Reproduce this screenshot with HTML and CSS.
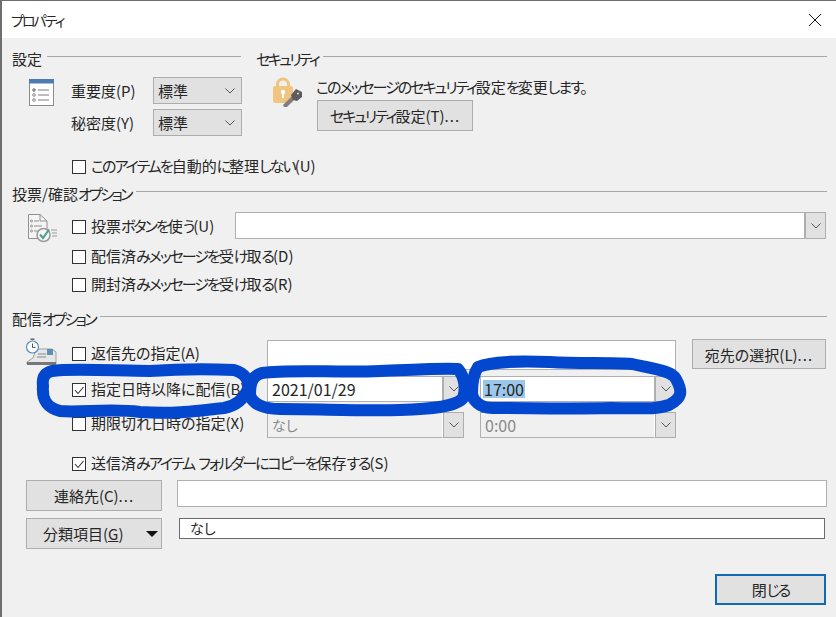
FILE: index.html
```html
<!DOCTYPE html>
<html lang="ja">
<head>
<meta charset="utf-8">
<title>プロパティ</title>
<link rel="stylesheet" href="styles.css">
</head>
<body>
<div class="dialog">
  <header class="titlebar">
    <span class="title"><span class="k">プロパティ</span></span>
    <svg class="close" width="14" height="14" viewBox="0 0 14 14"><path d="M1 1L13 13M13 1L1 13" stroke="#111" stroke-width="1" fill="none"/></svg>
  </header>
  <main class="main">
    <div class="top">
      <section class="col-left">
        <div class="legend"><span>設定</span><i></i></div>
        <div class="settings">
          <svg class="icon-list" width="25" height="27" viewBox="0 0 25 27">
            <rect x="0.5" y="0.5" width="24" height="26" fill="#fff" stroke="#8c8c8c"/>
            <rect x="0" y="0" width="25" height="4.500" fill="#4f7cb0"/>
            <g fill="#fff" stroke="#8a8a8a"><circle cx="5" cy="11" r="1.300" fill="#8a8a8a"/><circle cx="5" cy="16" r="1.300"/><circle cx="5" cy="21" r="1.300"/></g>
            <path d="M9 11H20M9 16H20M9 21H20" stroke="#7a7a7a"/>
          </svg>
          <div class="set-rows">
            <div class="set-row"><label class="set-label">重要度(P)</label><div class="select"><span>標準</span><svg class="chev" width="10" height="6" viewBox="0 0 10 6"><path d="M0.500 0.500L5 5L9.500 0.500" fill="none" stroke="#555"/></svg></div></div>
            <div class="set-row"><label class="set-label">秘密度(Y)</label><div class="select"><span>標準</span><svg class="chev" width="10" height="6" viewBox="0 0 10 6"><path d="M0.500 0.500L5 5L9.500 0.500" fill="none" stroke="#555"/></svg></div></div>
          </div>
        </div>
        <div class="check-row archive"><span class="check"></span><span class="lbl"><span class="k">このアイテムを</span>自動的<span class="k">に</span>整理<span class="k">しない</span>(U)</span></div>
      </section>
      <section class="col-right">
        <div class="legend"><span><span class="kk">セキュリティ</span></span><i></i></div>
        <div class="security">
          <svg class="icon-lock" width="32" height="32" viewBox="0 0 32 32">
            <path d="M6.500 10V7.500a5.500 5.500 0 0 1 11 0V10" fill="none" stroke="#efc47c" stroke-width="3"/>
            <rect x="2" y="9" width="20" height="17" rx="2" fill="#f0c57f"/>
            <circle cx="12" cy="15" r="2.200" fill="#fff"/><rect x="11" y="16" width="2" height="5" fill="#fff"/>
            <path d="M12 28L21 19L24 22L16 30L13 30Z" fill="#808080"/>
            <path d="M20 18L25 12L31 15L31 20L26 24L22 23Z" fill="#5c5c5c"/>
            <circle cx="27" cy="16.500" r="1" fill="#ddd"/>
          </svg>
          <div class="sec-text">
            <p><span class="k">このメッセージのセキュリティ</span>設定<span class="k">を</span>変更<span class="k">します。</span></p>
            <div class="btn sec-btn"><span><span class="k">セキュリティ</span>設定(T)<span class="d">...</span></span></div>
          </div>
        </div>
      </section>
    </div>

    <section class="vote">
      <div class="legend"><span>投票/確認<span class="kk">オプション</span></span><i></i></div>
      <div class="vote-body">
        <svg class="icon-vote" width="32" height="30" viewBox="0 0 32 30">
          <path d="M1.500 1.500H13L20 8V25.500H1.500Z" fill="#f4f4f4" stroke="#909090"/>
          <path d="M13 1.500V8H20" fill="none" stroke="#909090"/>
          <path d="M7 8H12M7 13H15M7 18H12" stroke="#8f8f8f"/>
          <g fill="none" stroke="#8f8f8f"><circle cx="4.500" cy="8" r="1"/><circle cx="4.500" cy="13" r="1"/><circle cx="4.500" cy="18" r="1"/></g>
          <circle cx="16.500" cy="22" r="6.500" fill="#f4f4f4" stroke="#9a9a9a" stroke-width="1.500"/>
          <path d="M13 21.500L16 25L22 16.500" fill="none" stroke="#4f9c8c" stroke-width="2"/>
          <path d="M24 17H30M25 20H30M25 23H30" stroke="#9a9a9a"/>
        </svg>
        <div class="vote-rows">
          <div class="vote-first">
            <div class="check-row vote-check"><span class="check"></span><span class="lbl">投票<span class="k">ボタンを</span>使<span class="k">う</span>(U)</span></div>
            <div class="combo vote-combo"><div class="field"></div><div class="drop"><svg width="10" height="6" viewBox="0 0 10 6"><path d="M0.500 0.500L5 5L9.500 0.500" fill="none" stroke="#555"/></svg></div></div>
          </div>
          <div class="check-row row-d"><span class="check"></span><span class="lbl">配信済<span class="k">みメッセージを</span>受<span class="k">け</span>取<span class="k">る</span>(D)</span></div>
          <div class="check-row row-r"><span class="check"></span><span class="lbl">開封済<span class="k">みメッセージを</span>受<span class="k">け</span>取<span class="k">る</span>(R)</span></div>
        </div>
      </div>
    </section>

    <section class="delivery">
      <div class="legend"><span>配信<span class="kk">オプション</span></span><i></i></div>
      <div class="delivery-grid">
        <svg class="icon-clock" width="32" height="28" viewBox="0 0 32 28">
          <path d="M8 20L11 11H27L31 14V26H2V24Z" fill="#e6e6e6" stroke="#a0a0a0"/>
          <rect x="22" y="11" width="6" height="6" fill="#5f8fb8"/>
          <path d="M13 16H21M12 19H21" stroke="#8a8a8a"/>
          <rect x="2" y="24" width="29" height="3" fill="#777"/>
          <circle cx="7.500" cy="9" r="6" fill="#fff" stroke="#4f8fc0" stroke-width="1.200"/>
          <path d="M7.500 5.500V9.500H10.500" fill="none" stroke="#555"/>
          <rect x="5.500" y="0.500" width="4" height="1.500" fill="#666"/>
        </svg>
        <div class="check-row cell-a"><span class="check"></span><span class="lbl">返信先の指定(A)</span></div>
        <div class="field reply"></div>
        <div class="btn reply-btn"><span>宛先の選択(L)<span class="d">...</span></span></div>

        <div class="check-row cell-b"><span class="check"><svg width="12" height="12" viewBox="0 0 12 12"><path d="M2 6L5 9.500L10.500 3" fill="none" stroke="#333" stroke-width="1.100"/></svg></span><span class="lbl">指定日時以降に配信(B)</span></div>
        <div class="combo date-b"><div class="field">2021/01/29</div><div class="drop"><svg width="10" height="6" viewBox="0 0 10 6"><path d="M0.500 0.500L5 5L9.500 0.500" fill="none" stroke="#555"/></svg></div></div>
        <div class="combo time-b"><div class="field"><span class="sel">17:00</span></div><div class="drop"><svg width="10" height="6" viewBox="0 0 10 6"><path d="M0.500 0.500L5 5L9.500 0.500" fill="none" stroke="#555"/></svg></div></div>

        <div class="check-row cell-c"><span class="check"></span><span class="lbl">期限切れ日時の指定(X)</span></div>
        <div class="combo off date-c"><div class="field nashi">なし</div><div class="drop"><svg width="10" height="6" viewBox="0 0 10 6"><path d="M0.500 0.500L5 5L9.500 0.500" fill="none" stroke="#555"/></svg></div></div>
        <div class="combo off time-c"><div class="field">0:00</div><div class="drop"><svg width="10" height="6" viewBox="0 0 10 6"><path d="M0.500 0.500L5 5L9.500 0.500" fill="none" stroke="#555"/></svg></div></div>

        <div class="check-row cell-d"><span class="check"><svg width="12" height="12" viewBox="0 0 12 12"><path d="M2 6L5 9.500L10.500 3" fill="none" stroke="#333" stroke-width="1.100"/></svg></span><span class="lbl">送信済<span class="k">みアイテム</span><span class="gap"> </span><span class="k">フォルダーにコピーを</span>保存<span class="k">する</span>(S)</span></div>
      </div>
    </section>

    <div class="contacts">
      <div class="btn side-btn"><span>連絡先(C)<span class="d">...</span></span></div>
      <div class="field contact-field"></div>
    </div>
    <div class="categories">
      <div class="btn side-btn cat-btn"><span>分類項目(<u>G</u>)</span><svg width="12" height="6" viewBox="0 0 12 6"><path d="M0 0H12L6 6Z" fill="#111"/></svg></div>
      <div class="cat-field">なし</div>
    </div>
    <div class="footer"><div class="btn close-btn"><span>閉<span class="k">じる</span></span></div></div>
  </main>
  <svg class="scribble" width="836" height="617" viewBox="0 0 836 617">
    <g fill="none" stroke="#0447cf" stroke-width="12" stroke-linecap="round" stroke-linejoin="round">
      <path d="M52 371C70 368 120 371 150 371C180 369 210 369 234 370C245 373 250 381 248 389C243 401 235 406 224 408C190 412 170 414 140 412C110 408 80 413 60 411C45 407 42 398 43 386C42 378 44 373 52 371Z"/>
      <path d="M262 373C290 369 340 373 380 371C410 370 440 368 458 369C465 377 466 390 463 398C456 407 430 409 400 410C360 411 320 409 280 409C262 409 252 403 250 395C250 383 252 376 262 373Z"/>
      <path d="M478 367C492 361 520 361 550 362C580 364 610 362 632 364C655 369 672 371 676 379C683 392 682 398 669 405C655 410 640 408 610 408C570 409 530 408 492 408C480 408 472 400 472 393C472 382 474 373 478 367Z"/>
    </g>
  </svg>
</div>
</body>
</html>
```
FILE: styles.css
```css
* { box-sizing: border-box; }
html, body { margin: 0; padding: 0; }
body {
  width: 836px;
  height: 617px;
  overflow: hidden;
  font-family: "Noto Sans CJK JP", "Noto Sans", sans-serif;
  font-size: 15px;
  font-feature-settings: "palt";
  color: #262626;
  background: #f0f0f0;
}
.dialog {
  position: relative;
  width: 836px;
  height: 617px;
  border-top: 1px solid #6e6e6e;
  border-left: 2px solid #6e6e6e;
  background: #f0f0f0;
}
.titlebar {
  height: 37px;
  background: #fff;
  display: flex;
  align-items: center;
  justify-content: space-between;
  padding: 0 14px 0 9px;
}
.title { font-size: 14px; }
.main { padding: 11px 9px 0 10px; }

.k { letter-spacing: -2px; }
.kk { letter-spacing: -2.6px; }
.d { letter-spacing: 1px; }
.lbl { padding-bottom: 3px; }
.gap { letter-spacing: 1px; }

.legend { display: flex; height: 20px; line-height: 19px; gap: 5px; }
.legend i { flex: 1; height: 1px; margin-top: 7px; background: #a8a8a8; }

.top { display: flex; gap: 15px; height: 128px; }
.col-left { width: 229px; }
.col-right { flex: 1; }
.settings { display: flex; margin-top: 8px; }
.icon-list { margin: 2px 0 0 17px; flex: none; }
.set-rows { margin-left: 17px; }
.set-row { display: flex; height: 27px; margin-bottom: 5px; }
.set-label { width: 82px; line-height: 28px; }
.select {
  width: 89px;
  height: 27px;
  background: #e1e1e1;
  border: 1px solid #adadad;
  display: flex;
  align-items: center;
  justify-content: space-between;
  padding: 0 6px 0 4px;
}
.check-row { display: flex; align-items: center; gap: 5px; height: 20px; white-space: pre; }
.check {
  width: 14px;
  height: 14px;
  flex: none;
  background: #fff;
  border: 1px solid #333;
  display: flex;
  align-items: center;
  justify-content: center;
}
.archive { margin: 16px 0 0 60px; }

.security { display: flex; margin-top: 8px; }
.icon-lock { margin-left: 15px; flex: none; }
.sec-text { margin-left: 13px; }
.sec-text p { margin: 0; line-height: 19px; white-space: nowrap; }
.btn {
  background: #e1e1e1;
  border: 1px solid #adadad;
  display: flex;
  align-items: center;
  justify-content: center;
  white-space: nowrap;
}
.sec-btn { width: 156px; height: 31px; margin: 4px 0 0 1px; }

.vote { margin-top: 7px; }
.vote-body { display: flex; }
.icon-vote { margin: 9px 0 0 15px; flex: none; }
.vote-rows { margin-left: 13px; flex: 1; }
.vote-first { display: flex; margin-top: 8px; height: 28px; }
.vote-check { width: 163px; height: 30px; }
.vote-combo { flex: 1; height: 27px; margin-right: 1px; }
.row-d { margin-top: 7px; }
.row-r { margin-top: 8px; }

.field {
  background: #fff;
  border: 1px solid #b0b0b0;
  display: flex;
  align-items: center;
  padding-left: 4px;
}
.combo { display: flex; }
.combo .field { flex: 1; font-size: 16px; }
.combo .nashi { font-size: 14px; }
.drop {
  width: 21px;
  flex: none;
  background: #e1e1e1;
  border: 1px solid #adadad;
  display: flex;
  align-items: center;
  justify-content: center;
}
.sel { background: #9cc6ea; padding: 0 1px; line-height: 18px; margin-left: -2px; }
.off .field { background: #f0f0f0; color: #8a8a8a; border-right-color: #fff; }

.delivery { margin-top: 14px; }
.delivery-grid {
  display: grid;
  grid-template-columns: 60px 195px 197px 16px 196px 16px 134px;
  grid-template-rows: 30px 26px 26px 20px;
  margin-top: 11px;
}
.icon-clock { grid-column: 1; grid-row: 1; margin: -2px 0 0 13px; }
.cell-a { grid-column: 2; grid-row: 1; align-self: center; margin-top: -2px; }
.reply { grid-column: 3 / 6; grid-row: 1; }
.reply-btn { grid-column: 7; grid-row: 1; height: 30px; margin-top: -1px; }
.cell-b { grid-column: 2; grid-row: 2; margin-top: 10px; }
.date-b { grid-column: 3; grid-row: 2; margin-top: 6px; height: 26px; }
.time-b { grid-column: 5; grid-row: 2; margin-top: 6px; height: 26px; }
.cell-c { grid-column: 2; grid-row: 3; margin-top: 18px; }
.date-c { grid-column: 3; grid-row: 3; margin-top: 16px; height: 26px; }
.time-c { grid-column: 5; grid-row: 3; margin-top: 16px; height: 26px; }
.cell-d { grid-column: 2 / 8; grid-row: 4; margin-top: 32px; }

.contacts, .categories { display: flex; margin-left: 14px; }
.contacts { margin-top: 38px; gap: 15px; }
.categories { margin-top: 7px; gap: 17px; }
.side-btn { width: 136px; height: 31px; flex: none; }
.contact-field { flex: 1; height: 27px; }
.cat-btn { justify-content: space-between; padding: 0 3px 0 16px; }
.cat-field {
  width: 646px;
  height: 21px;
  background: #fff;
  border: 1px solid #6b6b6b;
  font-size: 14px;
  line-height: 19px;
  padding-left: 10px;
}
.footer { display: flex; justify-content: flex-end; margin-top: 25px; }
.close-btn { width: 111px; height: 31px; border: 2px solid #1269b3; margin-right: 1px; }
.scribble { position: absolute; left: -2px; top: -1px; pointer-events: none; }
```
